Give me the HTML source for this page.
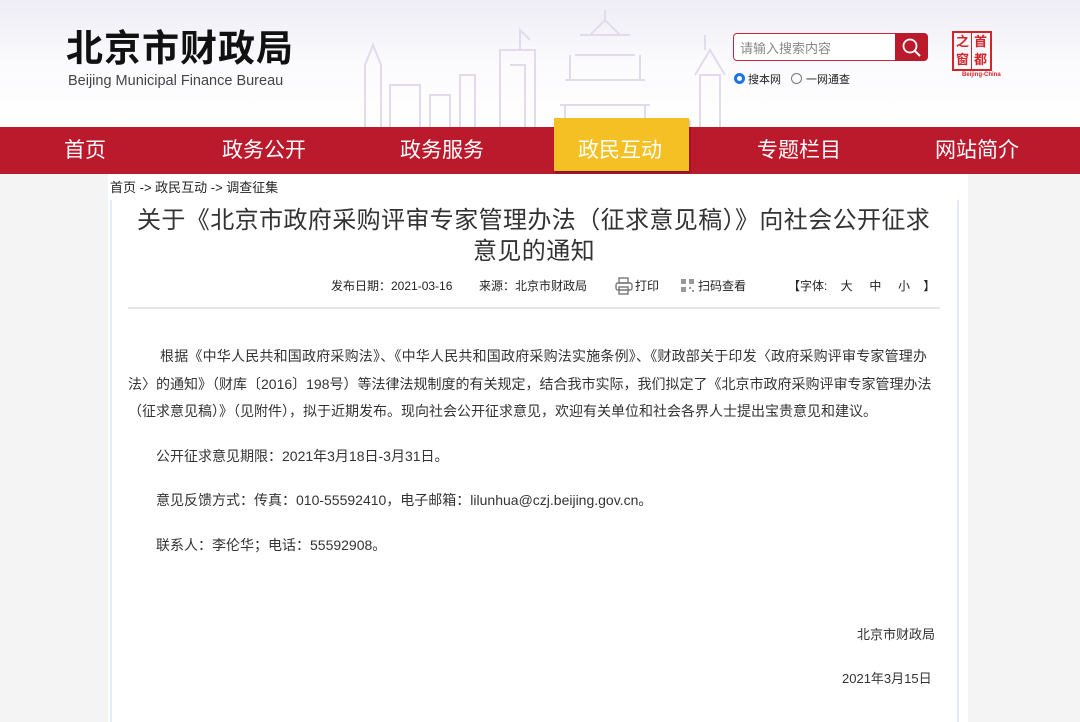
<!DOCTYPE html>
<html><head><meta charset="utf-8"><style>
*{margin:0;padding:0;box-sizing:border-box}
body{width:1080px;height:722px;overflow:hidden;background:#f4f4f4;font-family:"Liberation Sans","Noto Sans CJK SC",sans-serif;position:relative;color:#333}
.hdr{position:absolute;left:0;top:0;width:1080px;height:127px;background:linear-gradient(#eeecf5,#fbfbfd 50%,#fff)}
.abs{position:absolute;white-space:nowrap}
.nav{position:absolute;left:0;top:127px;width:1080px;height:47px;background:#bb1a2d}
.nav span{position:absolute;top:12px;color:#fff;font-size:21px;line-height:24px}
.main{position:absolute;left:108px;top:174px;width:860px;height:548px;background:#fff}
.p{position:absolute;font-size:14px;color:#333;white-space:nowrap}
.t{font-family:"Noto Sans CJK SC",sans-serif}
</style></head><body>
<div class="hdr">
<svg class="abs" style="left:350px;top:5px" width="420" height="122" viewBox="0 0 420 122" fill="none" stroke="#e2dbec" stroke-width="2">
<path d="M15 122V60l8-20 8 20v62M40 122V80h30v42M80 122V90h20v32M110 122V70h15v52M150 122V45h35v77M160 60h15v62M170 45V25l10 10" />
<path d="M230 30h50M225 50h60M215 75h80M210 100h90M240 30l15-15 15 15M220 50v25M290 50v25M215 100v22M295 100v22M255 15V5"/>
<path d="M350 122V70h20v52M345 70l15-25 15 25M355 45V30"/>
</svg>
<div class="abs" style="left:66px;top:28px;font-size:37px;font-weight:bold;color:#111;letter-spacing:1px;line-height:42px">北京市财政局</div>
<div class="abs" style="left:68px;top:73px;font-size:14.5px;color:#444">Beijing Municipal Finance Bureau</div>
<div class="abs" style="left:733px;top:33px;width:163px;height:28px;border:1px solid #c5283d;border-radius:4px 0 0 4px;background:#fff;font-size:13px;color:#888;padding:4px 0 0 6px">请输入搜索内容</div>
<div class="abs" style="left:895px;top:33px;width:33px;height:28px;background:#bb1a2d;border-radius:0 4px 4px 0">
<svg width="33" height="28"><circle cx="15" cy="13" r="6.5" stroke="#fff" stroke-width="1.8" fill="none"/><path d="M20 18l5 5" stroke="#fff" stroke-width="2"/></svg></div>
<div class="abs" style="left:734px;top:73px;width:11px;height:11px;border-radius:50%;border:3px solid #1a73e8"></div>
<div class="abs" style="left:748px;top:71px;font-size:11px;color:#222">搜本网</div>
<div class="abs" style="left:791px;top:73px;width:11px;height:11px;border-radius:50%;border:1px solid #777"></div>
<div class="abs" style="left:806px;top:71px;font-size:11px;color:#222">一网通查</div>
<div class="abs" style="left:952px;top:31px;width:40px;height:40px;border:2px solid #d2252a;font-size:13px;color:#d2252a;font-weight:bold">
<span class="abs" style="left:2px;top:1px;line-height:16px">之</span><span class="abs" style="left:20px;top:1px;line-height:16px">首</span>
<span class="abs" style="left:2px;top:19px;line-height:16px">窗</span><span class="abs" style="left:20px;top:19px;line-height:16px">都</span>
<div class="abs" style="left:17px;top:0;width:1px;height:36px;background:#d2252a"></div>
</div>
<div class="abs" style="left:962px;top:72px;font-size:6px;color:#d2252a;font-weight:bold">Beijing-China</div>
</div>
<div class="nav">
<span style="left:64px">首页</span>
<span style="left:222px">政务公开</span>
<span style="left:400px">政务服务</span>
<div class="abs" style="left:554px;top:-9px;width:135px;height:53px;background:#f4c024;box-shadow:1px 2px 2px rgba(0,0,0,.3)"></div>
<span style="left:578px">政民互动</span>
<span style="left:757px">专题栏目</span>
<span style="left:935px">网站简介</span>
</div>
<div class="main">
<div style="position:absolute;left:2px;top:26px;width:2px;height:522px;background:#e3ecf8"></div>
<div style="position:absolute;left:849px;top:26px;width:2px;height:522px;background:#e3ecf8"></div>
</div>
<div class="p" style="left:110px;top:177px;font-size:13px;color:#222">首页 -&gt; 政民互动 -&gt; 调查征集</div>
<div class="p t" style="left:137px;top:202px;font-size:24px;color:#333;line-height:32px;letter-spacing:0.4px">关于《北京市政府采购评审专家管理办法（征求意见稿）》向社会公开征求</div>
<div class="p t" style="left:473px;top:233px;font-size:24px;color:#333;line-height:32px;letter-spacing:0.4px">意见的通知</div>
<div class="p" style="left:331px;top:277px;font-size:12px;color:#222">发布日期：2021-03-16</div>
<div class="p" style="left:479px;top:277px;font-size:12px;color:#222">来源：北京市财政局</div>
<svg class="abs" style="left:614px;top:276px" width="20" height="20" fill="none" stroke="#777" stroke-width="1.4"><rect x="5" y="2" width="9" height="5"/><rect x="2" y="7" width="16" height="7" rx="2"/><rect x="5" y="11" width="9" height="7"/></svg>
<div class="p" style="left:635px;top:277px;font-size:12px;color:#222">打印</div>
<svg class="abs" style="left:681px;top:279px" width="13" height="13" fill="#999"><rect x="0" y="0" width="5" height="5"/><rect x="8" y="0" width="5" height="5"/><rect x="0" y="8" width="5" height="5"/><rect x="8" y="8" width="2" height="2"/><rect x="11" y="11" width="2" height="2"/></svg>
<div class="p" style="left:698px;top:277px;font-size:12px;color:#222">扫码查看</div>
<div class="p" style="left:788px;top:277px;font-size:12px;color:#222">【字体:&nbsp;&nbsp;&nbsp;&nbsp;大&nbsp;&nbsp;&nbsp;&nbsp;&nbsp;中&nbsp;&nbsp;&nbsp;&nbsp;&nbsp;小&nbsp;&nbsp;&nbsp;&nbsp;】</div>
<div style="position:absolute;left:128px;top:307px;width:812px;height:2px;background:#e6e6e6"></div>
<div class="p" style="left:160px;top:346px;letter-spacing:0.2px">根据《中华人民共和国政府采购法》、《中华人民共和国政府采购法实施条例》、《财政部关于印发〈政府采购评审专家管理办</div>
<div class="p" style="left:128px;top:374px">法〉的通知》（财库〔2016〕198号）等法律法规制度的有关规定，结合我市实际，我们拟定了《北京市政府采购评审专家管理办法</div>
<div class="p" style="left:128px;top:401px">（征求意见稿）》（见附件），拟于近期发布。现向社会公开征求意见，欢迎有关单位和社会各界人士提出宝贵意见和建议。</div>
<div class="p" style="left:156px;top:446px">公开征求意见期限：2021年3月18日-3月31日。</div>
<div class="p" style="left:156px;top:490px">意见反馈方式：传真：010-55592410，电子邮箱：lilunhua@czj.beijing.gov.cn。</div>
<div class="p" style="left:156px;top:535px">联系人：李伦华；电话：55592908。</div>
<div class="p" style="left:857px;top:624px;font-size:13px">北京市财政局</div>
<div class="p" style="left:842px;top:668px;font-size:13px">2021年3月15日</div>
</body></html>
